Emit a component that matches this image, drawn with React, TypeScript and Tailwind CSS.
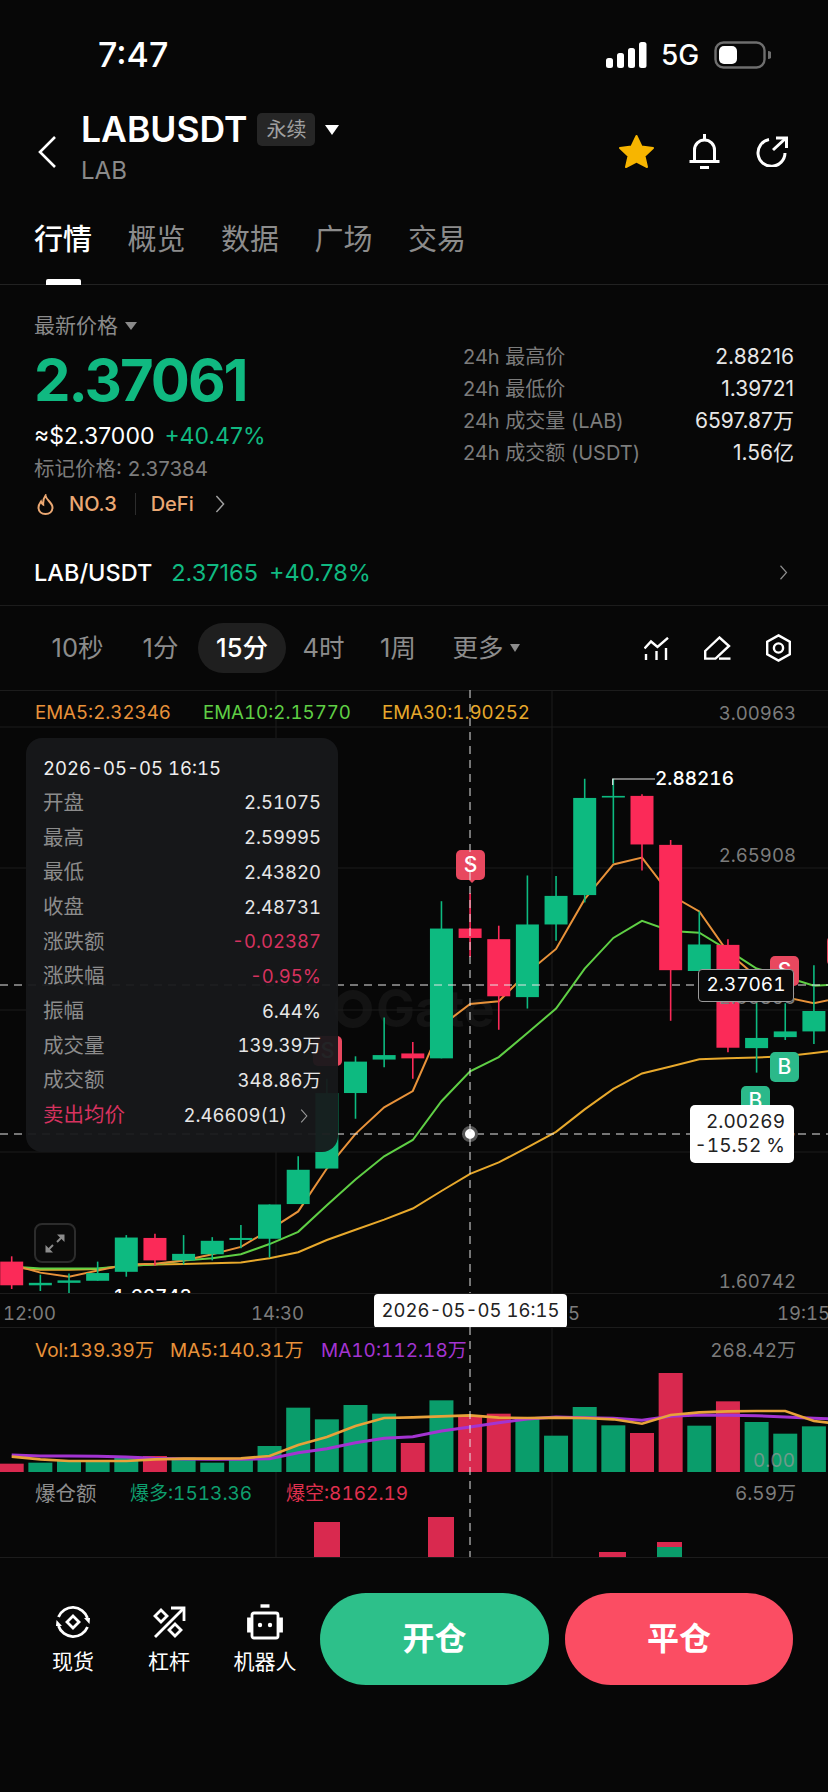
import React from 'react';

const UP = '#10b981';
const CANDLE_UP = '#0dba80';
const CANDLE_DOWN = '#fb2a58';
const BAR_UP = '#0a9d6b';
const BAR_DOWN = '#d9294f';

// centre of the i-th candle, volume bar etc.
const cx = (i: number) => 11.7 + 28.65 * i;
// the chart numbers below were read off a 2.45x squeezed crop
const zy = (z: number) => (z * 640) / 1568;

type Candle = [boolean, number, number, number, number];

const candles: Candle[] = [
  [false, 1385, 1398, 1456, 1465],
  [true, 1430, 1450, 1456, 1470],
  [true, 1427, 1444, 1450, 1478],
  [true, 1398, 1426, 1445, 1445],
  [true, 1333, 1339, 1423, 1435],
  [false, 1330, 1340, 1395, 1408],
  [true, 1333, 1379, 1395, 1405],
  [true, 1338, 1347, 1380, 1395],
  [true, 1308, 1340, 1345, 1365],
  [true, 1258, 1258, 1342, 1388],
  [true, 1140, 1173, 1257, 1257],
  [true, 950, 985, 1170, 1170],
  [true, 895, 908, 985, 1048],
  [true, 800, 892, 903, 922],
  [false, 860, 888, 900, 950],
  [true, 515, 582, 900, 900],
  [false, 495, 582, 605, 652],
  [false, 575, 608, 748, 830],
  [true, 452, 572, 750, 778],
  [true, 453, 502, 572, 612],
  [true, 215, 262, 500, 518],
  [true, 215, 257, 261, 422],
  [false, 253, 257, 376, 440],
  [false, 365, 377, 684, 808],
  [true, 540, 621, 686, 686],
  [false, 608, 622, 874, 885],
  [true, 760, 850, 875, 935],
  [true, 765, 834, 848, 855],
  [true, 672, 784, 834, 865],
  [true, 640, 825, 880, 900],
];

const ema5 = [1405, 1425, 1435, 1420, 1405, 1403, 1395, 1380, 1362, 1320, 1275, 1170, 1085, 1020, 980, 820, 767, 760, 690, 632, 510, 425, 408, 500, 540, 640, 700, 750, 765, 750];
const ema10 = [1410, 1415, 1415, 1415, 1408, 1405, 1395, 1390, 1380, 1355, 1325, 1260, 1197, 1140, 1100, 1005, 932, 897, 838, 778, 680, 605, 563, 588, 592, 635, 680, 700, 722, 718];
const ema30 = [1412, 1418, 1418, 1416, 1408, 1405, 1404, 1402, 1400, 1390, 1375, 1345, 1320, 1295, 1268, 1225, 1183, 1155, 1118, 1080, 1025, 975, 937, 920, 902, 900, 898, 895, 887, 878];

const volumes: [boolean, number][] = [
  [false, 518], [true, 515], [true, 510], [true, 510], [true, 500], [false, 495], [true, 500], [true, 515],
  [true, 505], [true, 465], [true, 350], [true, 385], [true, 342], [true, 368], [false, 456], [true, 328],
  [false, 375], [false, 368], [true, 380], [true, 434], [true, 348], [true, 403], [false, 426], [false, 246],
  [true, 404], [false, 331], [true, 393], [true, 428], [true, 406],
];

const volMa5 = [497, 505, 510, 510, 510, 505, 503, 503, 502, 495, 462, 438, 405, 381, 379, 376, 373, 380, 381, 380, 381, 385, 398, 372, 364, 361, 360, 360, 390, 400];
const volMa10 = [492, 495, 495, 496, 498, 502, 504, 505, 505, 503, 485, 473, 455, 442, 437, 420, 408, 395, 384, 378, 380, 382, 388, 376, 372, 373, 374, 378, 382, 385];

const tooltipRows: [string, string, boolean?][] = [
  ['开盘', '2.51075'],
  ['最高', '2.59995'],
  ['最低', '2.43820'],
  ['收盘', '2.48731'],
  ['涨跌额', '-0.02387', true],
  ['涨跌幅', '-0.95%', true],
  ['振幅', '6.44%'],
  ['成交量', '139.39万'],
  ['成交额', '348.86万'],
];

const stats = [
  ['24h 最高价', '2.88216'],
  ['24h 最低价', '1.39721'],
  ['24h 成交量 (LAB)', '6597.87万'],
  ['24h 成交额 (USDT)', '1.56亿'],
];

const Chevron = ({ className, color }: { className: string; color: string }) => (
  <svg viewBox="0 0 10 20" className={className} fill="none" stroke={color} strokeWidth="1.6">
    <polyline points="1,1 9,10 1,19" />
  </svg>
);

const Marker = ({ letter, className }: { letter: string; className: string }) => (
  <div className={`absolute flex h-[30px] w-[29px] items-center justify-center rounded-[5px] text-[21px] font-medium text-white ${className}`}>
    {letter}
  </div>
);

const YLabel = ({ text, top }: { text: string; top: string }) => (
  <span className={`absolute right-[32px] text-[18.6px] leading-[24px] text-[#7c7c7c] ${top}`}>{text}</span>
);

const MainChart = () => {
  const line = (vals: number[]) => vals.map((v, i) => `${cx(i)},${zy(v)}`).join(' ');
  return (
    <div className="relative h-[603px] overflow-hidden border-t border-[#1c1c1c] tabular-nums">
      <div className="absolute left-[334px] top-[296px] flex items-center gap-[4px] text-[52px] font-bold leading-[44px] text-[#131313]">
        <span className="h-[38px] w-[38px] rounded-full border-[9px] border-[#131313]" />
        <span>Gate</span>
      </div>

      <svg className="absolute left-0 top-0" width="828" height="603" fill="none">
        {[36, 177, 319, 461].map((y) => (
          <line key={y} x1="0" x2="828" y1={y} y2={y} stroke="#1c1c1c" />
        ))}
        {[276, 552].map((x) => (
          <line key={x} x1={x} x2={x} y1="0" y2="603" stroke="#1c1c1c" />
        ))}
        <polyline points={line(ema30)} stroke="#e8a92c" strokeWidth="2" />
        <polyline points={line(ema10)} stroke="#5fcf45" strokeWidth="2" />
        <polyline points={line(ema5)} stroke="#e8923a" strokeWidth="2" />
        {candles.map(([up, wt, bt, bb, wb], i) => (
          <g key={i} fill={up ? CANDLE_UP : CANDLE_DOWN} stroke={up ? CANDLE_UP : CANDLE_DOWN}>
            <line x1={cx(i)} x2={cx(i)} y1={zy(wt)} y2={zy(wb)} strokeWidth="1.6" />
            <rect x={cx(i) - 11.5} y={zy(bt)} width="23" height={zy(bb) - zy(bt)} stroke="none" />
          </g>
        ))}
        <polyline points="612.7,94 612.7,88 655,88" stroke="#e5e5e5" strokeWidth="1.2" />
        <line x1="0" x2="828" y1="294" y2="294" stroke="#e5e5e5" strokeDasharray="8 6" />
        <line x1="0" x2="828" y1="443" y2="443" stroke="#e5e5e5" strokeDasharray="8 6" />
      </svg>

      <span className="absolute left-[655px] top-[76px] text-[19px] font-medium leading-[24px] text-white">2.88216</span>
      <span className="absolute left-[113px] top-[594px] text-[19px] font-medium leading-[24px] text-white">1.60743</span>

      <div className="absolute left-[35px] top-[10px] text-[18.7px] leading-[24px] text-[#e8923a]">EMA5:2.32346</div>
      <div className="absolute left-[203px] top-[10px] text-[18.7px] leading-[24px] text-[#5fcf45]">EMA10:2.15770</div>
      <div className="absolute left-[382px] top-[10px] text-[18.7px] leading-[24px] text-[#e8a92c]">EMA30:1.90252</div>

      <YLabel text="3.00963" top="top-[10px]" />
      <YLabel text="2.65908" top="top-[152px]" />
      <YLabel text="2.30853" top="top-[294px]" />
      <YLabel text="1.95797" top="top-[437px]" />
      <YLabel text="1.60742" top="top-[578px]" />

      <Marker letter="S" className="left-[456px] top-[159px] bg-[#e8485f]" />
      <div className="absolute left-[469px] top-[189px] h-0 w-0 border-x-[3px] border-t-[3px] border-x-transparent border-t-[#e8485f]" />
      <Marker letter="S" className="left-[313px] top-[345px] bg-[#e8485f]" />
      <Marker letter="S" className="left-[770px] top-[265px] bg-[#e8485f]" />
      <Marker letter="S" className="left-[827px] top-[245px] bg-[#e8485f]" />
      <Marker letter="B" className="left-[770px] top-[361px] bg-[#2bb98a]" />
      <Marker letter="B" className="left-[741px] top-[395px] bg-[#2bb98a]" />

      <div className="absolute left-[698px] top-[278px] flex h-[33px] w-[96px] items-center justify-center whitespace-nowrap rounded-[4px] border border-[#9a9a9a] bg-[#0a0a0a] text-[19px] text-white">
        2.37061
      </div>

      <div className="absolute left-[690px] top-[414px] flex h-[58px] w-[104px] flex-col items-end justify-center whitespace-nowrap rounded-[5px] bg-white pr-[9px] text-[19px] leading-[24px] text-[#222]">
        <span>2.00269</span>
        <span>-15.52 %</span>
      </div>

      <div className="absolute left-[462px] top-[435px] h-[16px] w-[16px] rounded-full border-[3px] border-[#555] bg-white" />

      <div className="absolute left-[34px] top-[532px] flex h-[40px] w-[42px] items-center justify-center rounded-[8px] border-2 border-[#2c2c2c] bg-[#0a0a0a]">
        <svg width="20" height="19" viewBox="0 0 20 19" fill="#8c8c8c" stroke="#8c8c8c" strokeWidth="2">
          <line x1="3" y1="16" x2="8" y2="11" />
          <line x1="12" y1="8" x2="17" y2="3" />
          <polygon points="0.5,18.5 0.5,11 8,18.5" stroke="none" />
          <polygon points="19.5,0.5 19.5,8 12,0.5" stroke="none" />
        </svg>
      </div>

      <div className="absolute left-[26px] top-[47px] h-[414px] w-[312px] rounded-2xl bg-[#17181a]/95 px-[17px] pt-[13px]">
        <div className="flex h-[35px] items-center text-[18.5px] text-[#eeeeee]">2026-05-05 16:15</div>
        {tooltipRows.map(([label, value, down]) => (
          <div key={label} className="flex h-[34.7px] items-center justify-between">
            <span className="text-[20.5px] text-[#8c8c8c]">{label}</span>
            <span className={`text-[18.5px] ${down ? 'text-[#d6325f]' : 'text-[#e6e6e6]'}`}>{value}</span>
          </div>
        ))}
        <div className="flex h-[34.7px] items-center justify-between">
          <span className="text-[20.5px] text-[#d6325f]">卖出均价</span>
          <span className="flex items-center text-[18.5px] text-[#e6e6e6]">
            2.46609(1)
            <Chevron className="ml-[13px] mr-[13px] h-[14px] w-[8px]" color="#9a9a9a" />
          </span>
        </div>
      </div>
    </div>
  );
};

const TimeAxis = () => (
  <div className="relative h-[34px] overflow-hidden border-t border-[#1c1c1c] text-[18.5px] tabular-nums text-[#7c7c7c]">
    <span className="absolute left-[3px] top-[6px]">12:00</span>
    <span className="absolute left-[251px] top-[6px]">14:30</span>
    <span className="absolute left-[527px] top-[6px]">17:15</span>
    <span className="absolute left-[777px] top-[6px]">19:15</span>
    <div className="absolute left-[374px] top-0 flex h-[34px] w-[193px] items-center justify-center whitespace-nowrap rounded-[4px] bg-white text-[#222]">
      2026-05-05 16:15
    </div>
  </div>
);

const VolumePanel = () => {
  const line = (vals: number[]) => vals.map((v, i) => `${cx(i)},${v / 3 - 37}`).join(' ');
  return (
    <div className="relative h-[145px] overflow-hidden border-t border-[#1c1c1c] text-[19px] tabular-nums">
      <svg className="absolute left-0 top-0" width="828" height="145" fill="none">
        {[276, 552].map((x) => (
          <line key={x} x1={x} x2={x} y1="0" y2="145" stroke="#1c1c1c" />
        ))}
        {volumes.map(([up, top], i) => (
          <rect key={i} x={cx(i) - 12} y={top / 3 - 37} width="24" height={145 - (top / 3 - 37)} fill={up ? BAR_UP : BAR_DOWN} />
        ))}
        <polyline points={line(volMa10)} stroke="#a334d1" strokeWidth="3" />
        <polyline points={line(volMa5)} stroke="#e8a23a" strokeWidth="2.6" />
      </svg>
      <div className="absolute left-[35px] top-[10px] flex leading-[26px]">
        <span className="w-[135px] text-[#e8923a]">Vol:139.39万</span>
        <span className="w-[151px] text-[#e8923a]">MA5:140.31万</span>
        <span className="text-[#a334d1]">MA10:112.18万</span>
      </div>
      <span className="absolute right-[32px] top-[10px] leading-[26px] text-[#7c7c7c]">268.42万</span>
      <span className="absolute right-[33px] top-[120px] leading-[26px] text-[#9a9a9a]/70">0.00</span>
    </div>
  );
};

const LiquidationPanel = () => (
  <div className="relative h-[86px] overflow-hidden border-b border-[#1c1c1c] text-[19px] leading-[26px] tabular-nums">
    <svg className="absolute left-0 top-0" width="828" height="86" fill="none">
      {[276, 552].map((x) => (
        <line key={x} x1={x} x2={x} y1="0" y2="86" stroke="#1c1c1c" />
      ))}
      <rect x="314" y="50" width="26" height="36" fill={BAR_DOWN} />
      <rect x="428" y="45" width="26" height="41" fill={BAR_DOWN} />
      <rect x="599" y="80" width="27" height="6" fill={BAR_DOWN} />
      <rect x="657" y="70" width="25" height="5" fill={BAR_DOWN} />
      <rect x="657" y="75" width="25" height="11" fill={BAR_UP} />
    </svg>
    <div className="absolute left-[35px] top-[9px] flex">
      <span className="w-[95px] text-[20.5px] text-[#8c8c8c]">爆仓额</span>
      <span className="w-[156px] text-[#0e9f6e]">爆多:1513.36</span>
      <span className="text-[#e0304f]">爆空:8162.19</span>
    </div>
    <span className="absolute right-[32px] top-[9px] text-[#7c7c7c]">6.59万</span>
  </div>
);

const SpotIcon = () => (
  <svg width="38" height="36" viewBox="0 0 38 36" fill="none" stroke="white" strokeWidth="2.8">
    <path d="M4.5 13 A15.5 15.5 0 0 1 33.5 14" />
    <path d="M33.5 23 A15.5 15.5 0 0 1 4.5 22" />
    <polygon points="35.5,20 30,14 36,14" fill="white" stroke="none" />
    <polygon points="2.5,16 8,22 2,22" fill="white" stroke="none" />
    <polygon points="19,12 25,18 19,24 13,18" />
  </svg>
);

const LeverIcon = () => (
  <svg width="34" height="34" viewBox="0 0 34 34" fill="none" stroke="white" strokeWidth="2.8">
    <line x1="3" y1="32" x2="31" y2="4" />
    <polyline points="19,3 32,3 32,16" />
    <polygon points="9,5 15,11 9,17 3,11" />
    <polygon points="23,19 29,25 23,31 17,25" />
  </svg>
);

const RobotIcon = () => (
  <svg width="38" height="36" viewBox="0 0 38 36" fill="none" stroke="white" strokeWidth="2.8">
    <rect x="6" y="9" width="26" height="25" rx="2" />
    <line x1="14.5" y1="2" x2="23.5" y2="2" strokeWidth="3.4" />
    <path d="M5 15 H2.5 V27 H5" fill="white" />
    <path d="M33 15 H35.5 V27 H33" fill="white" />
    <circle cx="14" cy="21" r="2.2" fill="white" stroke="none" />
    <circle cx="24" cy="21" r="2.2" fill="white" stroke="none" />
  </svg>
);

const navItems = [
  { label: '现货', icon: <SpotIcon /> },
  { label: '杠杆', icon: <LeverIcon /> },
  { label: '机器人', icon: <RobotIcon /> },
];

export default function App() {
  return (
    <div className="h-[1792px] w-[828px] overflow-hidden bg-[#070707] font-['Inter','Noto_Sans_CJK_SC',sans-serif] text-white">
      {/* status bar */}
      <div className="flex h-[110px] items-center pb-[1px]">
        <span className="ml-[98px] text-[34px] font-medium">7:47</span>
        <div className="ml-auto flex items-center pr-[57px]">
          <svg width="41" height="26" viewBox="0 0 41 26" fill="white">
            <rect x="0" y="16" width="7" height="10" rx="2.5" />
            <rect x="11" y="11" width="7" height="15" rx="2.5" />
            <rect x="22" y="6" width="7" height="20" rx="2.5" />
            <rect x="33" y="0" width="7.5" height="26" rx="2.5" />
          </svg>
          <span className="ml-[14px] w-[39px] text-[28px] font-medium leading-none">5G</span>
          <svg className="ml-[14px]" width="57" height="28" viewBox="0 0 57 28" fill="none">
            <rect x="1.5" y="1.5" width="49" height="25" rx="8" stroke="#6e6e6e" strokeWidth="2.4" />
            <rect x="5" y="5" width="18" height="18" rx="5" fill="white" />
            <path d="M54 10 a4 4 0 0 1 0 8 z" fill="#6e6e6e" />
          </svg>
        </div>
      </div>

      {/* title row */}
      <div className="flex h-[110px] items-start">
        <svg className="ml-[38px] mt-[26px] h-[32px] w-[18px]" viewBox="0 0 18 32" fill="none" stroke="white" strokeWidth="2.6">
          <polyline points="17,1 2,16 17,31" />
        </svg>
        <div className="ml-[25px] mt-[3px]">
          <div className="flex h-[33px] items-center">
            <span className="text-[35.5px] font-semibold leading-none">LABUSDT</span>
            <span className="ml-[10px] flex h-[33px] w-[58px] items-center justify-center rounded-[5px] bg-[#262626] text-[20px] text-[#a0a0a0]">永续</span>
            <span className="ml-[10px] h-0 w-0 border-x-[7px] border-t-[10px] border-x-transparent border-t-white" />
          </div>
          <div className="mt-[11px] text-[24px] leading-[28px] text-[#8a8a8a]">LAB</div>
        </div>
        <div className="ml-auto mt-[23px] flex items-center pr-[40px]">
          <svg width="37" height="35" viewBox="0 0 37 35" fill="#f7b500" stroke="#f7b500" strokeWidth="2" strokeLinejoin="round">
            <polygon points="18.5,2 23.5,12.5 35,14 26.5,22 29,33 18.5,27.5 8,33 10.5,22 2,14 13.5,12.5" />
          </svg>
          <svg className="ml-[34px]" width="31" height="36" viewBox="0 0 31 36" fill="none" stroke="white" strokeWidth="3">
            <path d="M5.5 28 V17 a10 10 0 0 1 20 0 V28" />
            <line x1="0.5" y1="28.5" x2="30.5" y2="28.5" />
            <line x1="15.5" y1="1" x2="15.5" y2="6" />
            <line x1="11" y1="34.5" x2="20" y2="34.5" />
          </svg>
          <svg className="ml-[36px]" width="32" height="31" viewBox="0 0 32 31" fill="none" stroke="white" strokeWidth="3">
            <path d="M13 3.5 A13.5 13.5 0 1 0 29 17" />
            <line x1="17" y1="14" x2="30" y2="2" />
            <polyline points="20,2 30.5,2 30.5,12" />
          </svg>
        </div>
      </div>

      {/* tabs */}
      <div className="relative flex h-[65px] items-start gap-[35.5px] border-b border-[#222] pl-[34px] text-[29px] leading-[40px] text-[#8c8c8c]">
        <span className="font-medium text-white">行情</span>
        <span>概览</span>
        <span>数据</span>
        <span>广场</span>
        <span>交易</span>
        <div className="absolute bottom-[-1px] left-[46px] h-[6px] w-[35px] rounded-t-[2px] bg-white" />
      </div>

      {/* price block */}
      <div className="flex h-[255px]">
        <div className="pl-[34px]">
          <div className="mt-[26px] flex h-[30px] items-center text-[21px] text-[#8a8a8a]">
            最新价格
            <span className="ml-[7px] h-0 w-0 border-x-[6px] border-t-[8px] border-x-transparent border-t-[#8a8a8a]" />
          </div>
          <div className="mt-[8px] h-[62px] text-[58px] font-bold leading-[62px] tracking-[-2px]" style={{ color: UP }}>2.37061</div>
          <div className="mt-[9px] flex h-[32px] items-center text-[23px]">
            <span>≈$2.37000</span>
            <span className="ml-[10px] text-[#10b981]">+40.47%</span>
          </div>
          <div className="mt-[2px] h-[30px] text-[20.5px] leading-[30px] text-[#7c7c7c]">标记价格: 2.37384</div>
          <div className="mt-[5px] flex h-[30px] items-center text-[20px] font-medium text-[#eba873]">
            <svg className="ml-[3px]" width="17" height="21" viewBox="0 0 17 21" fill="none" stroke="#eba873" strokeWidth="2">
              <path d="M8.5 1.5 C9 6 15.5 8.5 15.5 13.5 C15.5 17.5 12.5 20 8.5 20 C4.5 20 1.5 17.5 1.5 13.5 C1.5 10.5 3 9 4 7.5 C4.5 9 5.2 10 6.2 10.5 C6 7 6.5 4 8.5 1.5 Z" />
            </svg>
            <span className="ml-[15px]">NO.3</span>
            <span className="ml-[18px] h-[22px] w-px bg-[#2c2c2c]" />
            <span className="ml-[15px]">DeFi</span>
            <Chevron className="ml-[21px] h-[18px] w-[10px]" color="#a0a0a0" />
          </div>
        </div>
        <div className="ml-auto w-[365px] pr-[34px] pt-[56px] text-[20px]">
          {stats.map(([label, value]) => (
            <div key={label} className="flex h-[32px] items-center justify-between">
              <span className="text-[#7c7c7c]">{label}</span>
              <span className="text-[21px] text-[#e6e6e6]">{value}</span>
            </div>
          ))}
        </div>
      </div>

      {/* spot pair */}
      <div className="flex h-[66px] items-center border-b border-[#1c1c1c] pl-[34px] pr-[40px] text-[23.5px]">
        <span className="font-medium">LAB/USDT</span>
        <span className="ml-[19px] text-[#10b981]">2.37165</span>
        <span className="ml-[11px] text-[#10b981]">+40.78%</span>
        <Chevron className="ml-auto h-[15px] w-[9px]" color="#8c8c8c" />
      </div>

      {/* intervals */}
      <div className="flex h-[84px] items-center whitespace-nowrap pl-[51px] text-[25.5px] text-[#8c8c8c]">
        <span className="flex w-[53px] justify-center">10秒</span>
        <span className="ml-[38px] flex w-[37px] justify-center">1分</span>
        <span className="ml-[19px] flex h-[50px] w-[88px] items-center justify-center rounded-full bg-[#1f1f1f] font-medium text-white">15分</span>
        <span className="ml-[17px] flex w-[41px] justify-center">4时</span>
        <span className="ml-[35px] flex w-[38px] justify-center">1周</span>
        <span className="ml-[35px] flex w-[52px] justify-center">更多</span>
        <span className="ml-[6px] h-0 w-0 border-x-[5.5px] border-t-[8px] border-x-transparent border-t-[#8c8c8c]" />
        <div className="ml-auto flex items-center gap-[35px] pr-[37px]">
          <svg width="25" height="23" viewBox="0 0 25 23" fill="none" stroke="white" strokeWidth="2.4">
            <polyline points="0.5,11.5 7,4.5 13.5,10 24,0.8" />
            <line x1="2" y1="17" x2="2" y2="23" />
            <line x1="12.5" y1="14" x2="12.5" y2="23" />
            <line x1="22" y1="11" x2="22" y2="23" />
          </svg>
          <svg width="27" height="24" viewBox="0 0 27 24" fill="none" stroke="white" strokeWidth="2.4">
            <polygon points="1.2,15 15.5,1.5 25,10 11.5,22.6 1.2,22.6" />
            <line x1="15" y1="22.6" x2="26.5" y2="22.6" />
          </svg>
          <svg width="25" height="28" viewBox="0 0 25 28" fill="none" stroke="white" strokeWidth="2.4">
            <polygon points="12.5,1.4 23.8,7.7 23.8,20.3 12.5,26.6 1.2,20.3 1.2,7.7" />
            <circle cx="12.5" cy="14" r="4.6" />
          </svg>
        </div>
      </div>

      {/* charts, the crosshair runs through all of them */}
      <div className="relative">
        <MainChart />
        <TimeAxis />
        <VolumePanel />
        <LiquidationPanel />
        <svg className="absolute left-[469px] top-0" width="2" height="867">
          <line x1="1" x2="1" y1="0" y2="603" stroke="#e5e5e5" strokeDasharray="8 6" />
          <line x1="1" x2="1" y1="637" y2="867" stroke="#e5e5e5" strokeDasharray="8 6" />
        </svg>
      </div>

      {/* bottom actions */}
      <div className="flex items-start pt-[35px]">
        <div className="ml-[25px] flex">
          {navItems.map((item) => (
            <div key={item.label} className="flex w-[96px] flex-col items-center">
              <div className="mt-[11px] flex h-[36px] items-center justify-center">{item.icon}</div>
              <span className="mt-[7px] text-[21px] leading-[30px]">{item.label}</span>
            </div>
          ))}
        </div>
        <button className="ml-[7px] h-[92px] w-[229px] rounded-full bg-[#2dc08a] text-[32px] font-semibold text-white">开仓</button>
        <button className="ml-[16px] h-[92px] w-[228px] rounded-full bg-[#fb4d63] text-[32px] font-semibold text-white">平仓</button>
      </div>
    </div>
  );
}
